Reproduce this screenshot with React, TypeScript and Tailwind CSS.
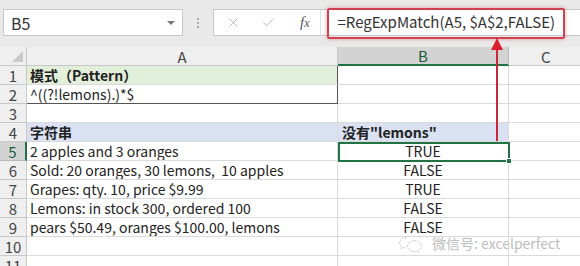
import { X, Check } from 'lucide-react';

const rows = [
    { a: '模式（Pattern）', b: '', kind: 'pattern' },
    { a: '^((?!lemons).)*$', b: '', kind: 'regex' },
    { a: '', b: '', kind: 'plain' },
    { a: '字符串', b: '没有"lemons"', kind: 'head' },
    { a: '2 apples and 3 oranges', b: 'TRUE', kind: 'data' },
    { a: 'Sold: 20 oranges, 30 lemons,  10 apples', b: 'FALSE', kind: 'data' },
    { a: 'Grapes: qty. 10, price $9.99', b: 'TRUE', kind: 'data' },
    { a: 'Lemons: in stock 300, ordered 100', b: 'FALSE', kind: 'data' },
    { a: 'pears $50.49, oranges $100.00, lemons', b: 'FALSE', kind: 'data' },
    { a: '', b: '', kind: 'plain' },
    { a: '', b: '', kind: 'plain' }
];

const font = { fontFamily: '"Noto Sans CJK SC", "Noto Sans", sans-serif' };

function FormulaBar() {
    return (
        <div className="flex items-start h-[47px] bg-[#e9e9e9] pt-[9px]" style={font}>
            <div className="ml-[3px] w-[180px] h-[27px] bg-white border border-[#c8c8c8] flex items-center justify-between px-[7px]">
                <span className="text-[16px] text-[#333]">B5</span>
                <span className="w-0 h-0 border-l-[4px] border-r-[4px] border-t-[4px] border-l-transparent border-r-transparent border-t-[#777]" />
            </div>
            <div className="w-[30px] h-[27px] flex flex-col items-center justify-center gap-[2px]">
                <span className="w-[2px] h-[2px] bg-[#aaa]" />
                <span className="w-[2px] h-[2px] bg-[#aaa]" />
                <span className="w-[2px] h-[2px] bg-[#aaa]" />
            </div>
            <div className="flex-1 min-w-0 overflow-hidden h-[27px] bg-white border border-[#c8c8c8] border-r-0 flex items-center whitespace-nowrap">
                <X className="shrink-0 ml-[12px] w-[15px] h-[15px] text-[#b4b4b4]" strokeWidth={1.5} />
                <Check className="shrink-0 ml-[20px] w-[15px] h-[15px] text-[#b4b4b4]" strokeWidth={1.5} />
                <span className="ml-[24px] text-[15px] italic text-[#555]" style={{ fontFamily: '"Liberation Serif", serif' }}>
                    f<span className="text-[12px]">x</span>
                </span>
                <span className="shrink-0 ml-[10px] w-px h-[27px] bg-[#e0e0e0]" />
                <span className="ml-[17px] text-[15px] text-[#333]">
                    =RegExpMatch(A5, $A$2,FALSE)
                </span>
            </div>
        </div>
    );
}

function Grid() {
    const line = 'border-r border-b border-[#dadada]';
    return (
        <div className="grid grid-cols-[27px_311px_171px_1fr] text-[14px] text-[#222]" style={font}>
            <div className="h-[19px] bg-[#efefef] border-r border-b border-[#c8c8c8] relative">
                <span className="absolute right-[3px] bottom-[3px] w-0 h-0" style={{ borderBottom: '11px solid #c9c9c9', borderLeft: '11px solid transparent' }} />
            </div>
            <div className="h-[19px] bg-[#efefef] border-r border-b border-[#c8c8c8] flex items-center justify-center text-[15px] text-[#444] leading-none">A</div>
            <div className="h-[19px] bg-[#d3d3d3] border-r border-[#b8b8b8] border-b-2 border-b-[#217346] flex items-center justify-center text-[15px] text-[#1d5a3a] leading-none">B</div>
            <div className="h-[19px] bg-[#efefef] border-b border-[#c8c8c8] flex items-center pl-[32px] text-[15px] text-[#444] leading-none">C</div>

            {rows.map((r, i) => {
                const n = i + 1;
                const sel = n === 5;
                const aBg = r.kind === 'pattern' ? 'bg-[#e2efda]' : r.kind === 'head' ? 'bg-[#d9e1f2]' : 'bg-white';
                const bBg = r.kind === 'head' ? 'bg-[#d9e1f2]' : 'bg-white';
                const aBorder = n === 1 || n === 2 ? 'border-r border-r-[#555]' : 'border-r border-r-[#dadada]';
                const aBottom = n === 2 ? 'border-b border-b-[#555]' : 'border-b border-b-[#dadada]';
                return [
                    <div
                        key={`h${n}`}
                        className={`h-[19px] flex items-center justify-center text-[15px] leading-none ${sel ? 'bg-[#d3d3d3] text-[#1d5a3a] border-r-2 border-r-[#217346] border-b border-b-[#b8b8b8]' : 'bg-[#efefef] text-[#444] border-r border-b border-[#c8c8c8]'}`}
                    >
                        {n}
                    </div>,
                    <div
                        key={`a${n}`}
                        className={`h-[19px] ${aBg} ${aBorder} ${aBottom} flex items-center pl-[3px] leading-none whitespace-pre overflow-hidden ${r.kind === 'pattern' || r.kind === 'head' ? 'font-bold' : ''}`}
                    >
                        {r.a}
                    </div>,
                    <div
                        key={`b${n}`}
                        className={`h-[19px] ${bBg} ${line} flex items-center leading-none whitespace-nowrap ${r.kind === 'head' ? 'font-bold pl-[4px]' : 'justify-center'}`}
                    >
                        {r.b}
                    </div>,
                    <div key={`c${n}`} className="h-[19px] bg-white border-b border-[#dadada]" />
                ];
            })}
        </div>
    );
}

function WeChatIcon() {
    return (
        <svg width="28" height="20" viewBox="0 0 34 22" fill="none" stroke="#c4c4c4" strokeWidth="1.2" strokeDasharray="2 1.5">
            <path d="M10 3c-5 0-8 3-8 6.5 0 2 1 3.5 2.5 4.5l-1 3 3.5-2c1 .3 2 .4 3 .4" />
            <path d="M20 7c-5 0-8.5 3-8.5 6.5S15 20 20 20c1 0 2-.1 2.8-.4l3 1.7-.8-2.6c2-1.2 3.3-3 3.3-5 0-3.6-3.5-6.7-8.3-6.7z" />
        </svg>
    );
}

export default function App() {
    return (
        <div className="relative w-[580px] h-[266px] overflow-hidden bg-white">
            <FormulaBar />
            <Grid />

            {/* selection border on B5 */}
            <div className="absolute left-[338px] top-[142px] w-[172px] h-[20px] border-2 border-[#217346]" />
            <div className="absolute left-[506px] top-[158px] w-[6px] h-[6px] bg-[#217346] border border-white" />

            {/* red highlight box */}
            <div className="absolute left-[327px] top-[8px] w-[238px] h-[31px] border-2 border-[#d2404f] rounded-[2px] shadow-[0_0_4px_rgba(210,64,79,0.45)]" />

            {/* red arrow */}
            <div className="absolute left-[496px] top-[46px] w-[2px] h-[95px] bg-[#c8283a]" />
            <div className="absolute left-[491px] top-[38px] w-0 h-0 border-l-[6px] border-r-[6px] border-b-[12px] border-l-transparent border-r-transparent border-b-[#d8202f]" />

            {/* watermark */}
            <div className="absolute left-[398px] top-[233px] flex items-center gap-[6px] whitespace-nowrap">
                <WeChatIcon />
                <span className="text-[14px] text-[#bdbdbd]" style={{ ...font, textShadow: '0 0 1px #fff, 0 0 1px #fff' }}>
                    微信号: excelperfect
                </span>
            </div>
        </div>
    );
}
